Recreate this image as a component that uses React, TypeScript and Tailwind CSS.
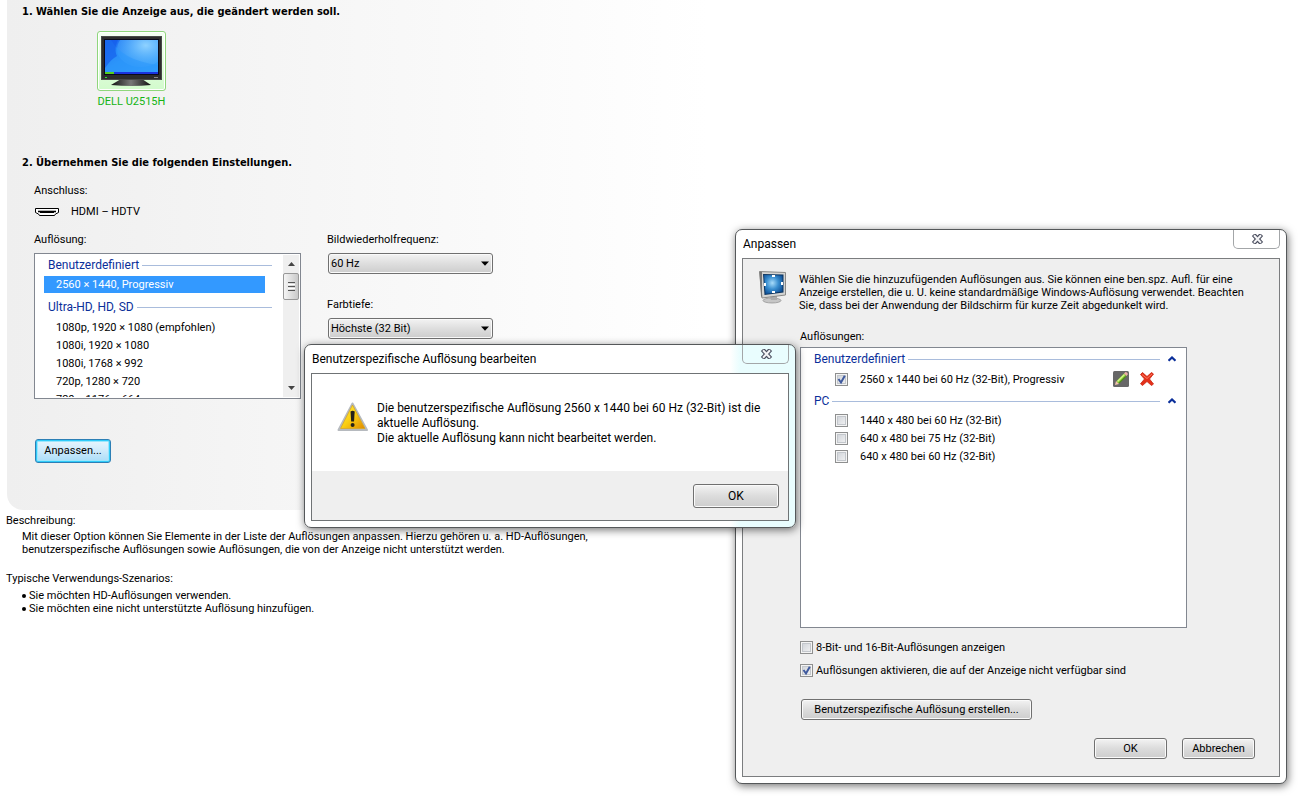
import React, { useState } from 'react'
import clsx from 'clsx'

const modes = [
  '1080p, 1920 × 1080 (empfohlen)',
  '1080i, 1920 × 1080',
  '1080i, 1768 × 992',
  '720p, 1280 × 720',
  '720p, 1176 × 664',
]

const pcModes = [
  '1440 x 480 bei 60 Hz (32-Bit)',
  '640 x 480 bei 75 Hz (32-Bit)',
  '640 x 480 bei 60 Hz (32-Bit)',
]

function MonitorPicture() {
  return (
    <svg width="61" height="50" viewBox="0 0 61 50" aria-hidden="true">
      <defs>
        <linearGradient id="screen" x1="0" y1="0" x2="1" y2="1">
          <stop offset="0" stopColor="#1a62f0" />
          <stop offset="0.45" stopColor="#2b92f8" />
          <stop offset="1" stopColor="#35a6ff" />
        </linearGradient>
        <radialGradient id="shine" cx="0.6" cy="0.4" r="0.6">
          <stop offset="0" stopColor="#8fd2ff" />
          <stop offset="1" stopColor="#45a6fb" stopOpacity="0.5" />
        </radialGradient>
        <linearGradient id="foot" x1="0" y1="0" x2="1" y2="0">
          <stop offset="0" stopColor="#111" />
          <stop offset="0.5" stopColor="#777" />
          <stop offset="1" stopColor="#111" />
        </linearGradient>
        <clipPath id="screenClip"><rect x="4" y="4" width="53" height="34" /></clipPath>
      </defs>
      <path d="M20 43h21l9 6q-19 2-40 0z" fill="url(#foot)" />
      <rect x="0" y="0" width="61" height="44" fill="#2c2c2c" />
      <rect x="0.5" y="0.5" width="60" height="43" fill="none" stroke="#484848" />
      <rect x="3" y="3" width="55" height="36" fill="#0a0a1c" />
      <rect x="4" y="4" width="53" height="34" fill="url(#screen)" />
      <g clipPath="url(#screenClip)">
        <ellipse cx="40" cy="13" rx="24" ry="18" fill="url(#shine)" />
        <path d="M4 4h6c8 14 24 22 47 25v9H4z" fill="#2c98fc" opacity="0.55" />
        <path d="M4 4h13c-3 6-3 12-1 16-4 2-8 6-12 12z" fill="#1358ea" opacity="0.6" />
      </g>
      <rect x="4" y="36" width="53" height="2" fill="#1a33e0" />
      <rect x="4" y="36" width="9" height="2" fill="#54d020" />
      <rect x="4" y="41" width="2" height="1" fill="#2fe030" />
      <rect x="53" y="41" width="4" height="1" fill="#888" />
    </svg>
  )
}

function HdmiIcon() {
  return (
    <svg width="24" height="10" viewBox="0 0 24 10" aria-hidden="true">
      <path d="M0.5 1.5h23v4l-3 1.5-1 1.5h-15l-1-1.5-3-1.5z" fill="#fff" stroke="#000" />
      <path d="M3 4.5h18" stroke="#000" strokeWidth="1.6" />
      <path d="M5 5.5h14" stroke="#000" />
    </svg>
  )
}

function DisplayIcon() {
  return (
    <svg width="30" height="34" viewBox="0 0 30 34" aria-hidden="true">
      <defs>
        <radialGradient id="glow" cx="0.45" cy="0.42" r="0.65">
          <stop offset="0" stopColor="#a8dcfa" />
          <stop offset="0.5" stopColor="#3a8fd0" />
          <stop offset="1" stopColor="#0d4f96" />
        </radialGradient>
      </defs>
      <ellipse cx="14" cy="29.5" rx="9" ry="2.5" fill="#c6c6c6" stroke="#8c8c8c" strokeWidth="0.7" />
      <path d="M12 25h7v4h-6z" fill="#aaa" />
      <path d="M1.5 0.5L27.5 1.5V24L4 27z" fill="#d4d4d2" stroke="#8a8a88" strokeWidth="1" />
      <path d="M1.5 0.5L4 1v25.5L3 25z" fill="#777" />
      <path d="M5 3l20.500 0.500V21.500L6.500 24z" fill="#0d3560" />
      <path d="M6 4l18.500 0.500V20.500L7.500 23z" fill="url(#glow)" />
      <rect x="14" y="4" width="3" height="2" fill="#fff" />
      <rect x="14" y="20" width="3" height="2" fill="#fff" />
      <rect x="6" y="12" width="2" height="3" fill="#fff" />
      <rect x="23" y="11" width="2" height="3" fill="#fff" />
    </svg>
  )
}

function WarningIcon() {
  return (
    <svg width="32" height="30" viewBox="0 0 32 30" aria-hidden="true">
      <defs>
        <linearGradient id="warn" x1="0" y1="0" x2="1" y2="1">
          <stop offset="0" stopColor="#fff04a" />
          <stop offset="0.5" stopColor="#fbcf12" />
          <stop offset="1" stopColor="#e08a00" />
        </linearGradient>
      </defs>
      <path d="M15.500 1.500L30 28H1.500z" fill="#d8d8d8" stroke="#b6babf" strokeWidth="2" strokeLinejoin="round" />
      <path d="M15.500 3L28 26.500H3.500z" fill="url(#warn)" stroke="#d6a520" strokeWidth="0.8" strokeLinejoin="round" />
      <path d="M13.500 9.500q2.100-1.600 4.200 0L17 19.500h-2.800z" fill="#26221a" />
      <circle cx="15.600" cy="23" r="2" fill="#26221a" />
    </svg>
  )
}

function PencilIcon() {
  return (
    <svg width="16" height="16" viewBox="0 0 16 16" aria-hidden="true">
      <rect width="16" height="16" rx="1.500" fill="#676767" />
      <path d="M2.500 13.500l1.500-4L11 2.500l2.500 2.500-7 7z" fill="#7bbf2a" />
      <path d="M4.500 10.500L11.500 3.500" stroke="#d3f58a" strokeWidth="1.600" />
      <path d="M6 12.300l7-7" stroke="#3f7d10" strokeWidth="1" />
      <path d="M11 2.500L12.500 1q1.500 0 2.500 2L13.500 5z" fill="#f0b0a8" />
      <path d="M2 14l1-4L6 13z" fill="#f3c2b0" />
    </svg>
  )
}

function DeleteIcon() {
  return (
    <svg width="16" height="16" viewBox="0 0 16 16" aria-hidden="true">
      <path d="M1.500 3.500L3.500 1.500 8 5.500l4.500-4L14.500 3 10.500 8l4 5-2 1.500L8 10.500 3.500 14.500 1.500 12.800 5.500 8z" fill="#e5301a" stroke="#c8240f" strokeWidth="0.800" strokeLinejoin="round" />
      <path d="M3 3.500L8 7.500l5-4.500" fill="none" stroke="#fb7a60" strokeWidth="1" />
    </svg>
  )
}

function Chevron() {
  return (
    <svg width="8" height="6" viewBox="0 0 8 6" aria-hidden="true">
      <path d="M0.500 4.800L4 1.500 7.500 4.800" fill="none" stroke="#0b2f9a" strokeWidth="2.200" />
    </svg>
  )
}

function PushButton({ children, className }: { children: React.ReactNode; className?: string }) {
  return (
    <button
      type="button"
      className={clsx(
        'rounded-[3px] border border-[#707070] bg-linear-to-b from-[#f3f3f3] from-0% via-[#dcdcdc] via-50% to-[#cdcdcd] shadow-[inset_0_0_0_1px_#fafafa]',
        className,
      )}
    >
      {children}
    </button>
  )
}

function Picker({ id, label, value }: { id: string; label: string; value: string }) {
  return (
    <div>
      <label htmlFor={id} className="block">{label}</label>
      <div className="relative mt-[6px] ml-px">
        <select
          id={id}
          className="block h-[21px] w-full appearance-none rounded-[3px] border border-[#707070] bg-linear-to-b from-[#f3f3f3] via-[#dedede] via-50% to-[#cdcdcd] pt-px pl-[2px] shadow-[inset_0_0_0_1px_#fafafa]"
        >
          <option>{value}</option>
        </select>
        <svg className="pointer-events-none absolute top-2 right-1" width="8" height="5" viewBox="0 0 8 5" aria-hidden="true">
          <path d="M0 0.500h8L4 4.800z" />
        </svg>
      </div>
    </div>
  )
}

function TickBox({ id, defaultChecked = false }: { id: string; defaultChecked?: boolean }) {
  const [on, setOn] = useState(defaultChecked)
  return (
    <span className="relative block size-[13px] shrink-0">
      <input
        id={id}
        type="checkbox"
        checked={on}
        onChange={() => setOn(!on)}
        className="block size-[13px] appearance-none border border-[#8e8f8f] bg-linear-to-br from-[#cbcfd5] to-[#f6f6f6] shadow-[inset_0_0_0_1px_#f4f4f4,inset_0_0_0_2px_#c3c7cc]"
      />
      {on && (
        <svg className="pointer-events-none absolute inset-0" width="13" height="13" viewBox="0 0 13 13" aria-hidden="true">
          <path d="M3.500 6L6 9.500 9.800 2.800" fill="none" stroke="#3f5a9e" strokeWidth="2" />
        </svg>
      )}
    </span>
  )
}

function GroupHeading({ children, onToggle = false }: { children: React.ReactNode; onToggle?: boolean }) {
  return (
    <div className="flex h-[18px] items-center gap-[3px] text-xs text-[#0b2f9a]">
      <span>{children}</span>
      <span className="h-px flex-1 bg-[#a9bcdc]" />
      {onToggle && (
        <button type="button" aria-label="Gruppe einklappen" className="ml-[5px]">
          <Chevron />
        </button>
      )}
    </div>
  )
}

function CloseButton() {
  return (
    <button
      type="button"
      aria-label="Schließen"
      className="flex h-[19px] w-[47px] items-center justify-center rounded-b-[5px] border border-t-0 border-[#a3a6a8] pl-[2px]"
    >
      <svg width="13" height="10" viewBox="0 0 13 10" aria-hidden="true">
        <path d="M2.500 0.500L10.500 9.500M10.500 0.500L2.500 9.500" stroke="#4c5060" strokeWidth="4.400" />
        <path d="M3 1.300L10 8.700M10 1.300L3 8.700" stroke="#f4f4f6" strokeWidth="2" />
      </svg>
    </button>
  )
}

function DialogWindow({ title, className, children }: { title: string; className: string; children: React.ReactNode }) {
  return (
    <section
      role="dialog"
      aria-label={title}
      className={clsx('absolute rounded-[7px] border border-[#55585a] px-[6px] pb-[6px] shadow-[1px_2px_8px_rgba(0,0,0,0.55)]', className)}
    >
      <header className="flex h-[28px] items-start justify-between">
        <h2 className="pl-px text-xs leading-[28px]">{title}</h2>
        <CloseButton />
      </header>
      {children}
    </section>
  )
}

function ResolutionList() {
  return (
    <div className="flex h-[146px] border border-[#828790] bg-white p-px">
      <div className="min-w-0 flex-1 overflow-hidden pt-px pl-2">
        <div className="pr-[11px] pl-1"><GroupHeading>Benutzerdefiniert</GroupHeading></div>
        <button type="button" className="mt-[2px] block h-[17px] w-[221px] bg-[#3399ff] pt-px pl-3 text-left text-white">
          2560 × 1440, Progressiv
        </button>
        <div className="mt-[5px] mb-[2px] pr-[11px] pl-1"><GroupHeading>Ultra-HD, HD, SD</GroupHeading></div>
        <ul>
          {modes.map((mode) => (
            <li key={mode}>
              <button type="button" className="block h-[18px] w-full pt-[2px] pl-3 text-left">{mode}</button>
            </li>
          ))}
        </ul>
      </div>
      <div className="flex w-4 flex-col bg-[#efefef]">
        <button type="button" aria-label="Nach oben" className="flex h-[18px] items-center justify-center">
          <svg width="7" height="4" viewBox="0 0 7 4" aria-hidden="true"><path d="M0 4L3.500 0 7 4z" fill="#444" /></svg>
        </button>
        <div className="flex h-[27px] flex-col items-center justify-center gap-px rounded-[2px] border border-[#989898] bg-linear-to-r from-[#f5f5f5] to-[#c9c9c9]">
          <span className="h-px w-[7px] bg-[#555]" />
          <span className="h-px w-[7px] bg-[#fff]" />
          <span className="h-px w-[7px] bg-[#555]" />
          <span className="h-px w-[7px] bg-[#fff]" />
          <span className="h-px w-[7px] bg-[#555]" />
        </div>
        <button type="button" aria-label="Nach unten" className="mt-auto flex h-[18px] items-center justify-center">
          <svg width="7" height="4" viewBox="0 0 7 4" aria-hidden="true"><path d="M0 0h7L3.500 4z" fill="#444" /></svg>
        </button>
      </div>
    </div>
  )
}

function SettingsPanel() {
  return (
    <div className="ml-[7px] rounded-bl-[16px] bg-linear-to-r from-[#efefef] to-white to-[700px] pt-[5px] pb-[47px] pl-[15px]">
      <h2 className="font-['DejaVu_Sans_Condensed',sans-serif] font-bold">1. Wählen Sie die Anzeige aus, die geändert werden soll.</h2>
      <button type="button" className="mt-3 ml-[75px] block w-[69px] text-[#14b414]">
        <span className="flex h-[60px] justify-center rounded-[3px] border border-[#8fd67c] bg-linear-to-b from-[#f4fff2] to-[#d2fbcc] pt-1 shadow-[inset_0_0_0_1px_#fff]">
          <MonitorPicture />
        </span>
        <span className="mt-1 block whitespace-nowrap">DELL U2515H</span>
      </button>
      <h2 className="mt-[47px] font-['DejaVu_Sans_Condensed',sans-serif] font-bold">2. Übernehmen Sie die folgenden Einstellungen.</h2>
      <div className="mt-[14px] pl-3">
        <p>Anschluss:</p>
        <p className="mt-[7px] flex items-center gap-3 pl-px">
          <HdmiIcon />
          HDMI – HDTV
        </p>
        <div className="mt-[14px] flex gap-[26px]">
          <div className="w-[267px]">
            <p className="mb-[6px]">Auflösung:</p>
            <ResolutionList />
          </div>
          <div className="flex w-[166px] flex-col gap-6">
            <Picker id="refresh" label="Bildwiederholfrequenz:" value="60 Hz" />
            <Picker id="depth" label="Farbtiefe:" value="Höchste (32 Bit)" />
          </div>
        </div>
        <button
          type="button"
          className="mt-10 ml-px block h-6 w-[76px] rounded-[3px] border border-[#2c7fb5] bg-linear-to-b from-[#e9f6fd] via-[#cdeafb] via-50% to-[#a8dcf8] shadow-[inset_0_0_0_1px_#2fcbf9,inset_0_0_0_2px_#9be6fc] outline-none"
        >
          Anpassen...
        </button>
      </div>
    </div>
  )
}

function Description() {
  return (
    <div className="pt-1 pl-[6px]">
      <p>Beschreibung:</p>
      <p className="mt-[2px] pl-4 leading-[13px]">
        Mit dieser Option können Sie Elemente in der Liste der Auflösungen anpassen. Hierzu gehören u. a. HD-Auflösungen,
        <br />
        benutzerspezifische Auflösungen sowie Auflösungen, die von der Anzeige nicht unterstützt werden.
      </p>
      <p className="mt-4">Typische Verwendungs-Szenarios:</p>
      <ul className="mt-[3px] pl-4 leading-[13px]">
        {['Sie möchten HD-Auflösungen verwenden.', 'Sie möchten eine nicht unterstützte Auflösung hinzufügen.'].map((text) => (
          <li key={text} className="flex items-center gap-[3px]">
            <span className="size-1 rounded-full bg-black" />
            {text}
          </li>
        ))}
      </ul>
    </div>
  )
}

function CustomizeDialog() {
  return (
    <DialogWindow title="Anpassen" className="top-[229px] left-[735px] w-[552px] bg-white">
      <div className="border border-[#7b7d7f] bg-[#efefef] pt-[12px] pr-6 pb-[17px] pl-[15px]">
        <div className="flex gap-[11px]">
          <DisplayIcon />
          <p className="pt-[2px] leading-[13px] whitespace-nowrap">
            Wählen Sie die hinzuzufügenden Auflösungen aus. Sie können eine ben.spz. Aufl. für eine
            <br />
            Anzeige erstellen, die u. U. keine standardmäßige Windows-Auflösung verwendet. Beachten
            <br />
            Sie, dass bei der Anwendung der Bildschirm für kurze Zeit abgedunkelt wird.
          </p>
        </div>
        <div className="pt-[18px] pr-[68px] pl-[42px]">
          <p>Auflösungen:</p>
          <div className="mt-[3px] h-[281px] border border-[#828790] bg-white pt-[2px] pr-[10px] pl-[13px]">
            <GroupHeading onToggle>Benutzerdefiniert</GroupHeading>
            <div className="mt-[2px] flex h-[18px] items-center pl-[21px]">
              <TickBox id="custom" defaultChecked />
              <label htmlFor="custom" className="ml-3 flex-1 pt-[2px]">2560 x 1440 bei 60 Hz (32-Bit), Progressiv</label>
              <button type="button" aria-label="Bearbeiten"><PencilIcon /></button>
              <button type="button" aria-label="Löschen" className="mr-[21px] ml-[10px]"><DeleteIcon /></button>
            </div>
            <div className="mt-1 mb-px"><GroupHeading onToggle>PC</GroupHeading></div>
            {pcModes.map((mode, i) => (
              <div key={mode} className="flex h-[18px] items-center pl-[21px]">
                <TickBox id={`pc${i}`} />
                <label htmlFor={`pc${i}`} className="ml-3 pt-[2px]">{mode}</label>
              </div>
            ))}
          </div>
          <div className="mt-[11px] flex items-center gap-[3px]">
            <TickBox id="lowdepth" />
            <label htmlFor="lowdepth" className="pt-[2px]">8-Bit- und 16-Bit-Auflösungen anzeigen</label>
          </div>
          <div className="mt-[7px] flex items-center gap-[3px]">
            <TickBox id="unsupported" defaultChecked />
            <label htmlFor="unsupported" className="pt-[2px]">Auflösungen aktivieren, die auf der Anzeige nicht verfügbar sind</label>
          </div>
          <PushButton className="mt-[21px] ml-px block h-[21px] w-[231px] pt-px">Benutzerspezifische Auflösung erstellen...</PushButton>
        </div>
        <div className="mt-[18px] flex justify-end gap-[15px]">
          <PushButton className="h-[21px] w-[73px] pt-px">OK</PushButton>
          <PushButton className="h-[21px] w-[73px] pt-px">Abbrechen</PushButton>
        </div>
      </div>
    </DialogWindow>
  )
}

function MessageDialog() {
  return (
    <DialogWindow
      title="Benutzerspezifische Auflösung bearbeiten"
      className="top-[344px] left-[304px] w-[492px] bg-linear-to-r from-white from-[425px] to-[#e9fdfe] to-[435px]"
    >
      <div className="border border-[#6f7375] bg-[#efefef] text-xs leading-[15px]">
        <div className="flex gap-2 bg-white pt-[27px] pb-[25px] pl-[25px] whitespace-nowrap">
          <div className="pt-px"><WarningIcon /></div>
          <p>
            Die benutzerspezifische Auflösung 2560 x 1440 bei 60 Hz (32-Bit) ist die
            <br />
            aktuelle Auflösung.
            <br />
            Die aktuelle Auflösung kann nicht bearbeitet werden.
          </p>
        </div>
        <div className="flex justify-end pt-[13px] pr-[9px] pb-3">
          <PushButton className="h-6 w-[86px]">OK</PushButton>
        </div>
      </div>
    </DialogWindow>
  )
}

export default function App() {
  return (
    <main className="relative min-h-screen overflow-hidden bg-white font-[Roboto,sans-serif] text-[11px] leading-[14px] text-black">
      <SettingsPanel />
      <Description />
      <CustomizeDialog />
      <MessageDialog />
    </main>
  )
}
